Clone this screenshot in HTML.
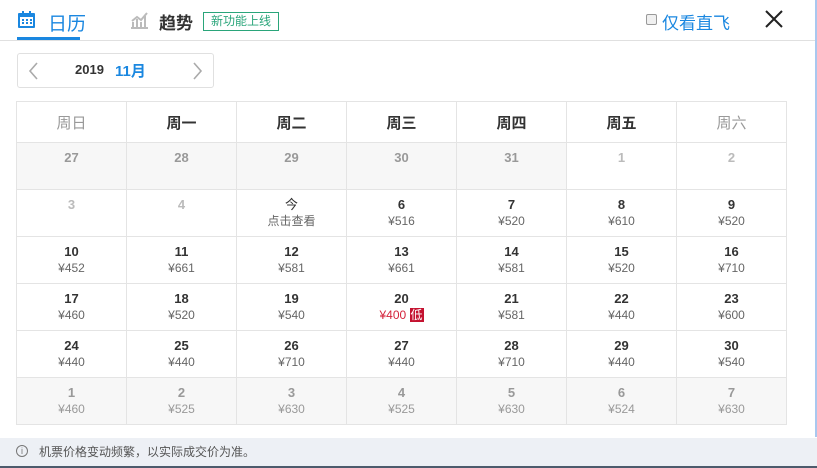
<!DOCTYPE html>
<html><head><meta charset="utf-8"><style>
*{margin:0;padding:0;box-sizing:border-box}
body{width:817px;height:468px;background:#fff;font-family:"Liberation Sans","Noto Sans CJK SC",sans-serif;position:relative;overflow:hidden;color:#333}
.abs{position:absolute}
table{position:absolute;left:16px;top:101px;border-collapse:collapse;table-layout:fixed}
td{width:110px;height:47px;border:1px solid #e4e4e4;text-align:center;vertical-align:top;padding-top:7px;font-size:12px;line-height:16px}
th{width:110px;height:41px;border:1px solid #e4e4e4;font-size:15px;font-weight:bold;color:#333}
th.we{color:#999;font-weight:normal}
td b{display:block;font-size:13px;color:#333}
td i{font-style:normal;color:#666}
td.g{background:#f7f7f7}
td.g b{color:#999}
td.g i{color:#999}
td.o b{color:#bbb}
</style></head><body>
<div class="abs" style="left:0;top:40px;width:815px;height:1px;background:#e0e0e0"></div>
<div class="abs" style="left:17px;top:37px;width:63px;height:3px;background:#1a87e0"></div>
<svg class="abs" style="left:17px;top:10px" width="20" height="20" viewBox="0 0 20 20"><rect x="1" y="3" width="17" height="15" rx="1" fill="#1a87e0"/><rect x="3" y="7" width="13" height="9" fill="#fff"/><rect x="5" y="1" width="2" height="4" fill="#1a87e0"/><rect x="12" y="1" width="2" height="4" fill="#1a87e0"/><g fill="#1a87e0"><rect x="5" y="9" width="2" height="2"/><rect x="9" y="9" width="2" height="2"/><rect x="13" y="9" width="2" height="2"/><rect x="5" y="12" width="2" height="2"/><rect x="9" y="12" width="2" height="2"/><rect x="13" y="12" width="2" height="2"/></g></svg>
<div class="abs" style="left:48px;top:9px;font-size:19px;color:#1a87e0">日历</div>
<svg class="abs" style="left:129px;top:10px" width="20" height="20" viewBox="0 0 20 20"><path d="M2 18h17M4 17v-5M8 17V9M12 17v-5M16 17V6M3 11l5-4 4 3 6-7" stroke="#bbb" stroke-width="2" fill="none"/></svg>
<div class="abs" style="left:159px;top:9px;font-size:17px;font-weight:bold;color:#333">趋势</div>
<div class="abs" style="left:203px;top:12px;width:76px;height:19px;border:1px solid #2aa57a;color:#2aa57a;font-size:12px;line-height:17px;text-align:center">新功能上线</div>
<div class="abs" style="left:646px;top:14px;width:11px;height:11px;border:1px solid #999;border-radius:2px;background:#f0f0f0"></div>
<div class="abs" style="left:662px;top:9px;font-size:17px;color:#1a87e0">仅看直飞</div>
<svg class="abs" style="left:764px;top:9px" width="20" height="20"><path d="M2 2L18 18M18 2L2 18" stroke="#222" stroke-width="2"/></svg>
<div class="abs" style="left:815px;top:0;width:2px;height:437px;background:#a9c8ef"></div>
<div class="abs" style="left:17px;top:53px;width:197px;height:35px;border:1px solid #e0e0e0;border-radius:3px"></div>
<svg class="abs" style="left:27px;top:62px" width="12" height="18"><path d="M10 1L3 9l7 8" stroke="#aaa" stroke-width="1.6" fill="none"/></svg>
<svg class="abs" style="left:192px;top:62px" width="12" height="18"><path d="M2 1l7 8-7 8" stroke="#aaa" stroke-width="1.6" fill="none"/></svg>
<div class="abs" style="left:75px;top:62px;font-size:13px;font-weight:bold;color:#333">2019</div>
<div class="abs" style="left:115px;top:60px;font-size:15px;font-weight:bold;color:#1a87e0">11月</div>
<table>
<tr><th class="we">周日</th><th>周一</th><th>周二</th><th>周三</th><th>周四</th><th>周五</th><th class="we">周六</th></tr>
<tr><td class="g"><b>27</b></td><td class="g"><b>28</b></td><td class="g"><b>29</b></td><td class="g"><b>30</b></td><td class="g"><b>31</b></td><td class="o"><b>1</b></td><td class="o"><b>2</b></td></tr>
<tr><td class="o"><b>3</b></td><td class="o"><b>4</b></td><td><b style="font-weight:normal">今</b><i>点击查看</i></td><td><b>6</b><i>¥516</i></td><td><b>7</b><i>¥520</i></td><td><b>8</b><i>¥610</i></td><td><b>9</b><i>¥520</i></td></tr>
<tr><td><b>10</b><i>¥452</i></td><td><b>11</b><i>¥661</i></td><td><b>12</b><i>¥581</i></td><td><b>13</b><i>¥661</i></td><td><b>14</b><i>¥581</i></td><td><b>15</b><i>¥520</i></td><td><b>16</b><i>¥710</i></td></tr>
<tr><td><b>17</b><i>¥460</i></td><td><b>18</b><i>¥520</i></td><td><b>19</b><i>¥540</i></td><td><b>20</b><i style="color:#d4233b">¥400 <span style="background:#c41230;color:#fff;padding:0 1px">低</span></i></td><td><b>21</b><i>¥581</i></td><td><b>22</b><i>¥440</i></td><td><b>23</b><i>¥600</i></td></tr>
<tr><td><b>24</b><i>¥440</i></td><td><b>25</b><i>¥440</i></td><td><b>26</b><i>¥710</i></td><td><b>27</b><i>¥440</i></td><td><b>28</b><i>¥710</i></td><td><b>29</b><i>¥440</i></td><td><b>30</b><i>¥540</i></td></tr>
<tr><td class="g"><b>1</b><i>¥460</i></td><td class="g"><b>2</b><i>¥525</i></td><td class="g"><b>3</b><i>¥630</i></td><td class="g"><b>4</b><i>¥525</i></td><td class="g"><b>5</b><i>¥630</i></td><td class="g"><b>6</b><i>¥524</i></td><td class="g"><b>7</b><i>¥630</i></td></tr>
</table>
<div class="abs" style="left:0;top:438px;width:817px;height:28px;background:#edf0f5"></div>
<div class="abs" style="left:0;top:466px;width:817px;height:2px;background:#4d5b6c"></div>
<div class="abs" style="left:16px;top:445px;width:12px;height:12px;border:1px solid #777;border-radius:50%;font-size:9px;line-height:10px;text-align:center;color:#777">i</div>
<div class="abs" style="left:39px;top:443px;font-size:12px;color:#555">机票价格变动频繁，以实际成交价为准。</div>
</body></html>
